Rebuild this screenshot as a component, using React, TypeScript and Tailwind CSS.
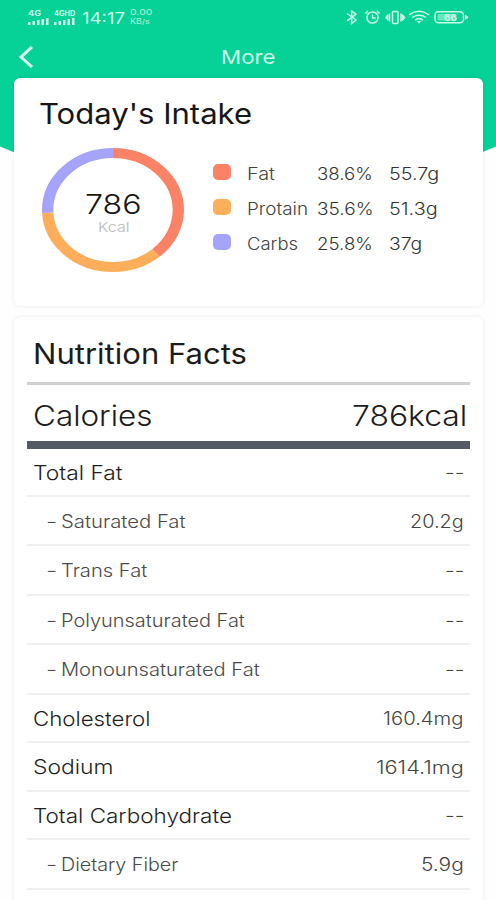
import { useLayoutEffect, useRef, useState } from "react";

type FitProps = { text: string; width: number; className?: string };

// Stretches one line of text horizontally so that it fills the given width.
function Fit({ text, width, className = "" }: FitProps) {
  const ref = useRef<HTMLSpanElement>(null);
  const [scale, setScale] = useState(1);
  useLayoutEffect(() => {
    if (ref.current) setScale(width / ref.current.offsetWidth);
  }, [text, width]);
  return (
    <span className={`block shrink-0 whitespace-nowrap ${className}`} style={{ width }}>
      <span ref={ref} className="inline-block origin-left" style={{ transform: `scaleX(${scale})` }}>
        {text}
      </span>
    </span>
  );
}

function Signal({ label, width }: { label: string; width: number }) {
  return (
    <div className="flex h-[15px] flex-col justify-between">
      <Fit text={label} width={width} className="text-[7px] leading-[7px] font-bold" />
      <svg width="21" height="7" viewBox="0 0 21 7" fill="currentColor">
        <rect x="0" y="4" width="2.5" height="3" />
        <rect x="4.5" y="3" width="2.5" height="4" />
        <rect x="9" y="2" width="2.5" height="5" />
        <rect x="13.5" y="1" width="2.5" height="6" />
        <rect x="18" y="0" width="2.5" height="7" />
      </svg>
    </div>
  );
}

function StatusBar() {
  return (
    <div className="flex h-[36px] items-center pr-[26px] pb-[2px] pl-[28px] text-[#c9fbe6]">
      <Signal label="4G" width={13} />
      <div className="w-[5px]" />
      <Signal label="4GHD" width={21} />
      <Fit text="14:17" width={43} className="ml-[7px] pt-[1px] text-[16px] font-normal" />
      <div className="ml-[5px] flex flex-col opacity-80">
        <Fit text="0.00" width={22} className="text-[7px] leading-[9px] font-medium" />
        <Fit text="KB/s" width={20} className="text-[7px] leading-[9px] font-medium" />
      </div>
      <svg className="ml-auto" width="124" height="18" viewBox="0 0 124 18" fill="none" stroke="currentColor" strokeWidth="1.5">
        <path d="M1 5.5 10 12 5.6 15.5V3L10 6.2 1 12.8" />
        <circle cx="26.5" cy="9.5" r="5.6" />
        <path d="M26.5 6.5v3.4h3.2M19.5 5.5 22 3M33.5 5.5 31 3" />
        <rect x="46.5" y="3.5" width="5.5" height="12" rx="1" />
        <path d="M43.5 5.5v8M55 5.5v8" />
        <path d="M42 6.5 39.5 9.5 42 12.5ZM56.5 6.5 59 9.5 56.5 12.5Z" fill="currentColor" strokeWidth="1" />
        <path d="M63 6.8Q73 -.2 83 6.8M66 9.5Q73 4.8 80 9.5M69 12.2Q73 9.5 77 12.2" />
        <path d="M70.5 13h5L73 15.8Z" fill="currentColor" stroke="none" />
        <rect x="89" y="3.7" width="28.5" height="11" rx="3.5" />
        <path d="M119 6.5 122.5 9.2 119 12Z" fill="currentColor" stroke="none" />
        <rect x="91.5" y="6" width="18" height="6.5" rx="1" fill="currentColor" fillOpacity=".5" stroke="none" />
        <text x="98" y="12.5" fontSize="9" fontWeight="700" textLength="13" lengthAdjust="spacingAndGlyphs" fill="currentColor" stroke="none">
          66
        </text>
      </svg>
    </div>
  );
}

function Ring() {
  const segments = [
    { value: 38.6, offset: 0, color: "#f98267" },
    { value: 35.6, offset: 38.6, color: "#fdae5a" },
    { value: 25.8, offset: 74.2, color: "#a5a4fa" },
  ];
  return (
    <div className="grid h-[124px] w-[142px] place-items-center">
      <svg className="col-start-1 row-start-1" width="142" height="124" viewBox="0 0 100 100" preserveAspectRatio="none">
        {segments.map((s) => (
          <circle
            key={s.color}
            cx="50"
            cy="50"
            r="46"
            fill="none"
            stroke={s.color}
            strokeWidth="8"
            pathLength={100}
            strokeDasharray={`${s.value} ${100 - s.value}`}
            strokeDashoffset={-s.offset}
            transform="rotate(-90 50 50)"
          />
        ))}
      </svg>
      <div className="col-start-1 row-start-1 flex flex-col items-center pt-[7px]">
        <Fit text="786" width={56} className="text-[27px] leading-[26px] font-light text-[#161616]" />
        <Fit text="Kcal" width={31} className="text-[13px] leading-[18px] font-light text-[#b9b9b9]" />
      </div>
    </div>
  );
}

const legend = [
  { name: "Fat", nameW: 28, pct: "38.6%", grams: "55.7g", gramsW: 50, dot: "bg-[#f98267]" },
  { name: "Protain", nameW: 61, pct: "35.6%", grams: "51.3g", gramsW: 49, dot: "bg-[#fdae5a]" },
  { name: "Carbs", nameW: 51, pct: "25.8%", grams: "37g", gramsW: 33, dot: "bg-[#a5a4fa]" },
];

const facts = [
  { label: "Total Fat", w: 90, value: "--", vw: 19, sub: false, h: "h-[48px]" },
  { label: "Saturated Fat", w: 125, value: "20.2g", vw: 54, sub: true, h: "h-[49px]" },
  { label: "Trans Fat", w: 86, value: "--", vw: 19, sub: true, h: "h-[50px]" },
  { label: "Polyunsaturated Fat", w: 184, value: "--", vw: 19, sub: true, h: "h-[49px]" },
  { label: "Monounsaturated Fat", w: 199, value: "--", vw: 19, sub: true, h: "h-[50px]" },
  { label: "Cholesterol", w: 118, value: "160.4mg", vw: 81, sub: false, h: "h-[48px]" },
  { label: "Sodium", w: 80, value: "1614.1mg", vw: 88, sub: false, h: "h-[49px]" },
  { label: "Total Carbohydrate", w: 199, value: "--", vw: 19, sub: false, h: "h-[48px]" },
  { label: "Dietary Fiber", w: 117, value: "5.9g", vw: 43, sub: true, h: "h-[50px]" },
];

export default function App() {
  return (
    <div className="relative h-[900px] w-[496px] overflow-hidden bg-[#fefefe] font-['Inter',sans-serif]">
      <svg className="absolute top-0 left-0" width="496" height="210" viewBox="0 0 496 210">
        <path d="M0 0H496V146.500Q248 256 0 146.500Z" fill="#06d197" />
      </svg>
      <div className="relative flex flex-col">
        <StatusBar />
        <header className="grid h-[42px] grid-cols-[1fr_auto_1fr] items-center">
          <svg className="ml-[18px]" width="16" height="22" viewBox="0 0 16 22" fill="none" stroke="#dcfff2" strokeWidth="3">
            <path d="M14 1 3 11 14 21" />
          </svg>
          <Fit text="More" width={54} className="pt-[2px] text-[19px] leading-[40px] text-[#c9fbe6]" />
        </header>

        <section className="mr-[13px] ml-[14px] h-[228px] rounded-[6px] bg-white shadow-[0_0_4px_rgba(0,0,0,0.09)]">
          <Fit text="Today's Intake" width={213} className="pt-[15px] pl-[25px] text-[28px] leading-[42px] text-[#161616]" />
          <div className="flex pt-[13px] pl-[28px]">
            <Ring />
            <div className="ml-[29px] flex flex-col pt-[8px]">
              {legend.map((l) => (
                <div key={l.name} className="flex h-[35px] items-center pt-[2px] text-[17px] font-light text-[#333]">
                  <i className={`mb-[5px] h-[16px] w-[18px] rounded-[5px] ${l.dot}`} />
                  <div className="ml-[16px] w-[70px] text-[#444]">
                    <Fit text={l.name} width={l.nameW} />
                  </div>
                  <div className="w-[72px]">
                    <Fit text={l.pct} width={56} />
                  </div>
                  <Fit text={l.grams} width={l.gramsW} />
                </div>
              ))}
            </div>
          </div>
        </section>

        <section className="mt-[11px] mr-[13px] ml-[14px] h-[600px] rounded-[6px] bg-white pr-[13px] pl-[13px] shadow-[0_0_4px_rgba(0,0,0,0.09)]">
          <div className="flex h-[68px] items-center border-b-[3px] border-[#d0d0d0] pt-[8px] pl-[6px]">
            <Fit text="Nutrition Facts" width={214} className="text-[28px] text-[#1c1c1c]" />
          </div>
          <div className="flex h-[64px] items-center justify-between border-b-[8px] border-[#545963] pt-[5px] pr-[3px] pl-[6px] text-[28px] font-light text-[#1c1c1c]">
            <Fit text="Calories" width={119} />
            <Fit text="786kcal" width={115} />
          </div>
          {facts.map((f) => (
            <div key={f.label} className={`flex items-center border-b-2 border-[#f0f0f0] pt-px pr-[6px] ${f.h}`}>
              {f.sub ? (
                <div className="flex pl-[19px] text-[18px] font-light text-[#4a4a4a]">
                  <Fit text="-" width={11} />
                  <Fit text={f.label} width={f.w} className="ml-[4px]" />
                </div>
              ) : (
                <Fit text={f.label} width={f.w} className="pl-[6px] text-[20px] font-light text-[#1f1f1f]" />
              )}
              <Fit text={f.value} width={f.vw} className="ml-auto text-[18px] font-light text-[#444]" />
            </div>
          ))}
        </section>
      </div>
    </div>
  );
}
